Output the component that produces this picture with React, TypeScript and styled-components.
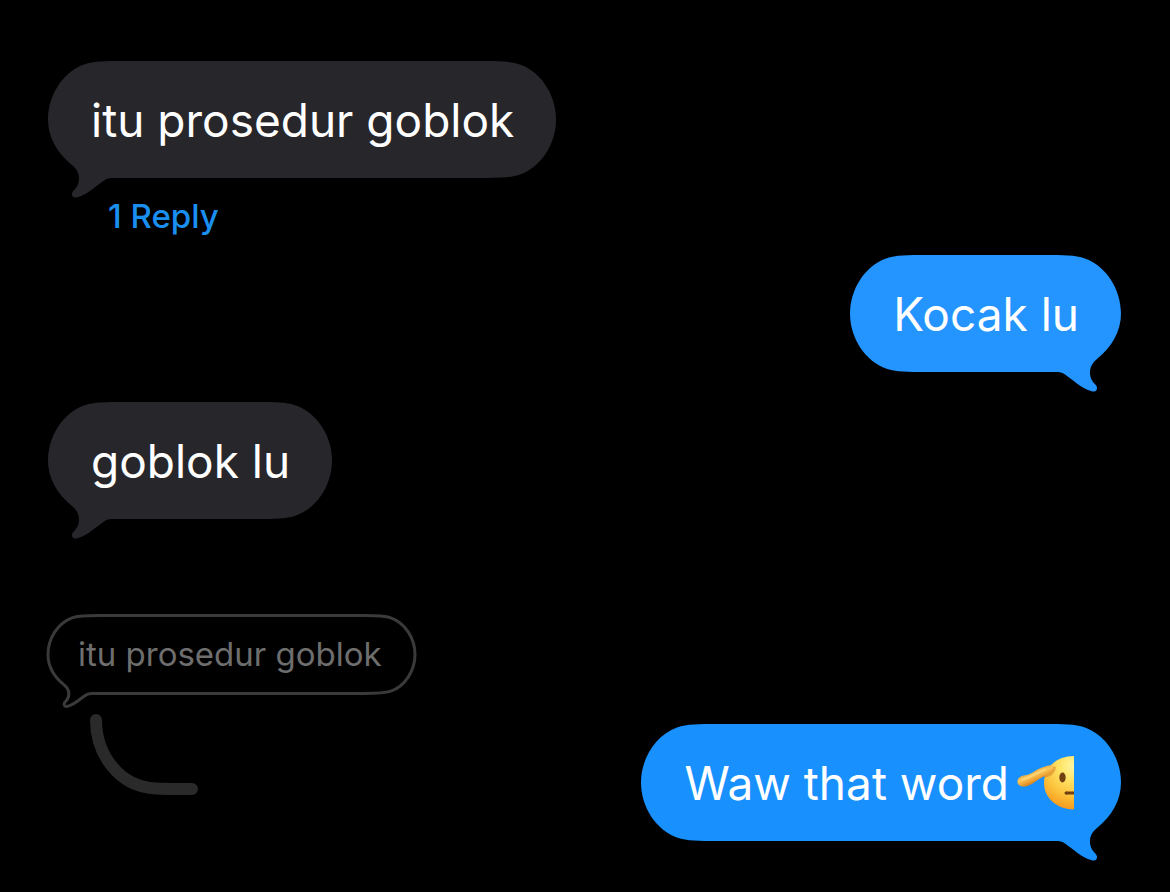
import React from "react";
import styled, { createGlobalStyle, css } from "styled-components";

const GlobalStyle = createGlobalStyle`
  *, *::before, *::after { box-sizing: border-box; }
  body {
    margin: 0;
    background: #000000;
    color: #ffffff;
    font-family: Inter, "Liberation Sans", sans-serif;
    -webkit-font-smoothing: antialiased;
  }
`;

type Side = "left" | "right";
type Tone = "received" | "sent" | "sentLatest" | "quote";

const fills: Record<Tone, string> = {
  received: "#27262b",
  sent: "#2494ff",
  sentLatest: "#1891ff",
  quote: "none",
};

const Thread = styled.main`
  display: flex;
  flex-direction: column;
  min-height: 100vh;
  padding: 61px 49px 32px 48px;
`;

const Message = styled.div<{ $side: Side }>`
  display: flex;
  flex-direction: column;
  align-items: ${(p) => (p.$side === "left" ? "flex-start" : "flex-end")};
`;

const ReceivedReply = styled(Message)`
  margin-top: 30px;
`;

const Quote = styled(Message)`
  margin-top: 96px;
`;

const ReplyRow = styled.div`
  display: flex;
  justify-content: space-between;
  align-items: flex-start;
  margin-top: 21px;
`;

const LatestMessage = styled(Message)`
  margin-top: 10px;
`;

const ReplyLink = styled.button`
  margin: 20px 0 0 60px;
  padding: 0;
  border: 0;
  background: none;
  color: #1b8ff0;
  font: 500 33px/36px Inter, "Liberation Sans", sans-serif;
  cursor: pointer;
`;

const SentMessage = styled(Message)`
  margin-top: 21px;
`;

const BubbleBox = styled.div<{ $small: boolean; $tone: Tone }>`
  position: relative;
  display: flex;
  align-items: center;
  justify-content: center;
  white-space: nowrap;
  ${(p) =>
    p.$small
      ? css`
          height: 78px;
          padding: 0 33px 0 30px;
          color: #6e6e6e;
          font-size: 33px;
          line-height: 40px;
        `
      : css`
          height: 117px;
          padding: 0 42px 0 43px;
          font-size: 46px;
          line-height: 58px;
        `}

  &::before {
    content: "";
    position: absolute;
    top: ${(p) => (p.$small ? "-1px" : "0")};
    bottom: ${(p) => (p.$small ? "-2px" : "0")};
    left: ${(p) => (p.$small ? "50px" : "75px")};
    right: ${(p) => (p.$small ? "50px" : "75px")};
    ${(p) =>
      p.$small
        ? css`
            border: solid #3a3a3a;
            border-width: 3px 0;
          `
        : css`
            background: ${fills[p.$tone]};
          `}
  }
`;

const Cap = styled.svg<{ $edge: Side; $flip?: boolean }>`
  position: absolute;
  top: 0;
  ${(p) => (p.$edge === "left" ? "left: 0;" : "right: 0;")}
  overflow: visible;
  transform: ${(p) => (p.$flip ? "scaleX(-1)" : "none")};
`;

const BubbleText = styled.span`
  position: relative;
  display: flex;
  align-items: center;
  gap: 8px;
`;

const TAIL =
  "M76 0C58 0 46 0 36 3.500C15 11 0 34 0 58.500C0 76 9 92 24 104C32 110 33 120 28 127C25 130 24 131 24 133C24 136 26 137.500 30 136C40 133 48 125 56 119.500C59 117.500 61 117 66 117H76";
const ROUND =
  "M76 0C58 0 46 0 36 3.500C15 11 0 34 0 58.500C0 83 15 106 36 113.500C46 117 58 117 76 117";

function Bubble({
  tone,
  tail,
  children,
}: {
  tone: Tone;
  tail: Side;
  children: React.ReactNode;
}) {
  const small = tone === "quote";
  const size = small ? { width: 51, height: 78 } : { width: 76, height: 117 };
  const paint = small
    ? { fill: "none", stroke: "#3a3a3a", strokeWidth: 3 }
    : { fill: fills[tone] };
  return (
    <BubbleBox $small={small} $tone={tone}>
      {(["left", "right"] as Side[]).map((edge) => (
        <Cap
          key={edge}
          $edge={edge}
          $flip={edge === "right"}
          {...size}
          viewBox={small ? "0 -0.75 76 117" : "0 0 76 117"}
          preserveAspectRatio="none"
          aria-hidden="true"
        >
          <path
            d={edge === tail ? TAIL : ROUND}
            vectorEffect="non-scaling-stroke"
            {...paint}
          />
        </Cap>
      ))}
      <BubbleText>{children}</BubbleText>
    </BubbleBox>
  );
}

const Connector = styled.svg`
  display: block;
  flex: none;
  margin-left: 42px;
`;

const Emoji = styled.svg`
  display: block;
  flex: none;
  margin-right: 5px;
`;

function HalfSalute() {
  return (
    <Emoji width="57" height="55" viewBox="0 0 57 55" role="img" aria-label="saluting face, left half">
      <defs>
        <radialGradient id="face" gradientUnits="userSpaceOnUse" cx="57" cy="11" r="46">
          <stop offset="0" stopColor="#fff7a6" />
          <stop offset="0.3" stopColor="#fee468" />
          <stop offset="0.65" stopColor="#fcc23c" />
          <stop offset="0.92" stopColor="#f79e1f" />
          <stop offset="1" stopColor="#ea8618" />
        </radialGradient>
        <linearGradient id="hand" gradientUnits="userSpaceOnUse" x1="13" y1="15" x2="19" y2="29">
          <stop offset="0" stopColor="#e0a23c" />
          <stop offset="0.4" stopColor="#fbc75a" />
          <stop offset="0.7" stopColor="#ee9f30" />
          <stop offset="1" stopColor="#bf7016" />
        </linearGradient>
      </defs>
      <path d="M57 1C40 1 27 12 27 28C27 43 40 54.500 57 54.500Z" fill="url(#face)" />
      <path d="M27 22C32 23 38 19 39 12L34 11L27 16Z" fill="#c96e22" opacity="0.45" />
      <path
        d="M0.500 26C1 22 5 20.500 10 20C16 18 20 14 25 12.500C29 11 33 9.500 35.500 10.500C37.500 12 36 15 33 17.500C29 20 26 22 22 24C18 27 13 31 8 31.500C4 32 0 30 0.500 26Z"
        fill="url(#hand)"
      />
      <path d="M5 24.500C13 23 20 17.500 28 14.500" fill="none" stroke="#ffdf8a" strokeWidth="2" strokeLinecap="round" opacity="0.6" />
      <ellipse cx="45.500" cy="22.500" rx="3.200" ry="5" fill="#704012" />
      <path d="M57 38H49" stroke="#704012" strokeWidth="3" />
      <path d="M49.500 38H49" stroke="#704012" strokeWidth="3" strokeLinecap="round" />
    </Emoji>
  );
}

export default function App() {
  return (
    <>
      <GlobalStyle />
      <Thread>
        <Message $side="left">
          <Bubble tone="received" tail="left">itu prosedur goblok</Bubble>
          <ReplyLink type="button">1 Reply</ReplyLink>
        </Message>
        <SentMessage $side="right">
          <Bubble tone="sent" tail="right">Kocak lu</Bubble>
        </SentMessage>
        <ReceivedReply $side="left">
          <Bubble tone="received" tail="left">goblok lu</Bubble>
        </ReceivedReply>
        <Quote $side="left">
          <Bubble tone="quote" tail="left">itu prosedur goblok</Bubble>
        </Quote>
        <ReplyRow>
          <Connector width="108" height="81" viewBox="0 0 108 81" aria-hidden="true">
            <path
              d="M6 6C6 39 28 73 66 74.500C76 75 90 75 102 75"
              fill="none"
              stroke="#2a2a2a"
              strokeWidth="12"
              strokeLinecap="round"
            />
          </Connector>
          <LatestMessage $side="right">
            <Bubble tone="sentLatest" tail="right">
              Waw that word
              <HalfSalute />
            </Bubble>
          </LatestMessage>
        </ReplyRow>
      </Thread>
    </>
  );
}
